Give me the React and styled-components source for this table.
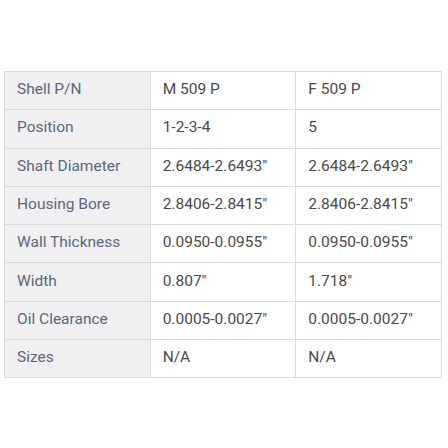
import React from 'react';
import styled, { createGlobalStyle } from 'styled-components';

const GlobalStyle = createGlobalStyle`
    html, body {
        margin: 0;
        padding: 0;
        background: #fff;
    }
    body {
        font-family: Roboto, "Liberation Sans", sans-serif;
    }
`;

const rows = [
    ['Shell P/N', 'M 509 P', 'F 509 P'],
    ['Position', '1-2-3-4', '5'],
    ['Shaft Diameter', '2.6484-2.6493"', '2.6484-2.6493"'],
    ['Housing Bore', '2.8406-2.8415"', '2.8406-2.8415"'],
    ['Wall Thickness', '0.0950-0.0955"', '0.0950-0.0955"'],
    ['Width', '0.807"', '1.718"'],
    ['Oil Clearance', '0.0005-0.0027"', '0.0005-0.0027"'],
    ['Sizes', 'N/A', 'N/A'],
];

function App() {
    return (
        <Page>
            <GlobalStyle />
            <SpecTable>
                <tbody>
                    {rows.map(([label, a, b]) => (
                        <tr key={label}>
                            <Label>{label}</Label>
                            <Value>{a}</Value>
                            <Value>{b}</Value>
                        </tr>
                    ))}
                </tbody>
            </SpecTable>
        </Page>
    );
}

const Page = styled.div`
    padding: 71px 6px 0 4px;
`;

const SpecTable = styled.table`
    width: 438px;
    border-collapse: collapse;
    table-layout: fixed;
    font-size: 15.5px;
`;

const Cell = styled.td`
    box-sizing: border-box;
    height: 38.3px;
    padding: 0 12px 3px;
    border: 1px solid #dadada;
    text-align: left;
    vertical-align: middle;
    white-space: nowrap;
    line-height: 18px;
`;

const Label = styled(Cell)`
    background: #f0f0f2;
    color: #5d677c;
`;

const Value = styled(Cell)`
    background: #fff;
    color: #4a4a4a;
`;

export default App;
